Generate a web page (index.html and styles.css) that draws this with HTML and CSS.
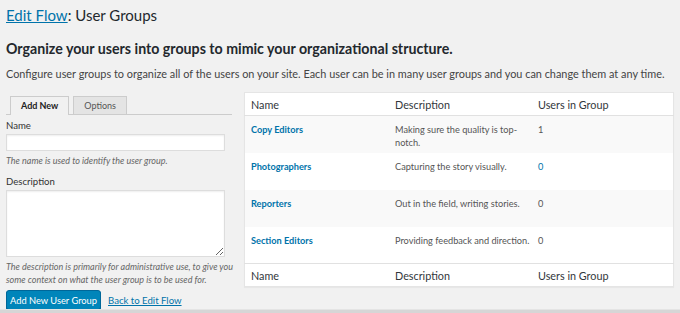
FILE: index.html
```html
<!DOCTYPE html>
<html>
<head>
    <title>Edit Flow: User Groups</title>
    <link rel="stylesheet" href="styles.css">
</head>
<body>
    <div class="wrap">
        <h1><a href="#">Edit Flow</a>: User Groups</h1>
        <h2>Organize your users into groups to mimic your organizational structure.</h2>
        <p class="intro">Configure user groups to organize all of the users on your site. Each user can be in many user groups and you can change them at any time.</p>

        <div class="columns">
            <div class="col-left">
                <div class="tabs">
                    <span class="tab active">Add New</span>
                    <span class="tab">Options</span>
                </div>
                <div class="form-field">
                    <label for="name">Name</label>
                    <input type="text" id="name">
                    <p class="help">The name is used to identify the user group.</p>
                </div>
                <div class="form-field">
                    <label for="description">Description</label>
                    <textarea id="description"></textarea>
                    <p class="help">The description is primarily for administrative use, to give you some context on what the user group is to be used for.</p>
                </div>
                <div class="actions">
                    <button class="btn-primary">Add New User Group</button>
                    <a href="#" class="back">Back to Edit Flow</a>
                </div>
            </div>

            <div class="col-right">
                <table class="groups">
                    <thead>
                        <tr><th class="c-name">Name</th><th class="c-desc">Description</th><th>Users in Group</th></tr>
                    </thead>
                    <tbody>
                        <tr class="alt"><td><a href="#">Copy Editors</a></td><td class="desc">Making sure the quality is top-notch.</td><td>1</td></tr>
                        <tr><td><a href="#">Photographers</a></td><td class="desc">Capturing the story visually.</td><td class="count">0</td></tr>
                        <tr class="alt"><td><a href="#">Reporters</a></td><td class="desc">Out in the field, writing stories.</td><td>0</td></tr>
                        <tr><td><a href="#">Section Editors</a></td><td class="desc">Providing feedback and direction.</td><td>0</td></tr>
                    </tbody>
                    <tfoot>
                        <tr><th>Name</th><th>Description</th><th>Users in Group</th></tr>
                    </tfoot>
                </table>
            </div>
        </div>
    </div>
    <div class="footer-line"></div>
</body>
</html>
```

FILE: styles.css
```css
body {
    margin: 0;
    background-color: #f1f1f1;
    font-family: Lato, "Open Sans", sans-serif;
    color: #444;
    height: 313px;
    overflow: hidden;
    position: relative;
}

.wrap {
    padding: 0 6px;
}

h1 {
    font-size: 15px;
    font-weight: normal;
    color: #23282d;
    margin: 0;
    padding-top: 4px;
    line-height: 22px;
}

h1 a {
    color: #0073aa;
}

h2 {
    font-size: 14.2px;
    font-weight: bold;
    color: #23282d;
    margin: 13px 0 0;
    line-height: 20px;
}

.intro {
    font-size: 10.9px;
    margin: 7px 0 0;
    line-height: 16px;
    color: #444;
    white-space: nowrap;
}

.columns {
    display: flex;
    gap: 4px;
    margin-top: 10px;
}

.col-left {
    width: 234px;
    padding-top: 4px;
}

.col-right {
    flex: 1;
}

.tabs {
    display: flex;
    gap: 4px;
    padding-left: 4px;
    border-bottom: 1px solid #ccc;
    height: 18px;
    margin-right: 8px;
}

.tab {
    font-size: 9px;
    line-height: 17px;
    padding: 0 10px;
    border: 1px solid #ccc;
    border-bottom: none;
    background-color: #e4e4e4;
    color: #555;
}

.tab.active {
    background-color: #f1f1f1;
    color: #222;
    font-weight: bold;
    height: 18px;
}

.form-field label {
    display: block;
    font-size: 9.6px;
    color: #333;
    line-height: 13px;
    margin-top: 4px;
}

.form-field + .form-field label {
    margin-top: 8px;
}

.form-field input,
.form-field textarea {
    display: block;
    box-sizing: border-box;
    width: 219px;
    border: 1px solid #ddd;
    box-shadow: inset 0 1px 2px rgba(0, 0, 0, 0.07);
    background-color: #fff;
    margin: 2px 0 0;
}

.form-field input {
    height: 17px;
}

.form-field textarea {
    height: 67px;
    resize: vertical;
}

.help {
    font-size: 9px;
    font-style: italic;
    color: #666;
    margin: 3px 0 0;
    line-height: 13px;
}

.actions {
    margin-top: 4px;
    display: flex;
    align-items: center;
    gap: 7px;
}

.btn-primary {
    background-color: #0085ba;
    border: 1px solid #006799;
    border-radius: 3px;
    color: #fff;
    font-family: inherit;
    font-size: 9.3px;
    white-space: nowrap;
    height: 20px;
    width: 95px;
    padding: 0;
    box-shadow: 0 1px 0 #006799;
}

.back {
    font-size: 9.6px;
    color: #0073aa;
}

.groups {
    width: 430px;
    border-collapse: collapse;
    background-color: #fff;
    border: 1px solid #e5e5e5;
    box-shadow: 0 1px 1px rgba(0, 0, 0, 0.04);
    font-size: 9.2px;
}

.groups th {
    text-align: left;
    font-weight: normal;
    font-size: 10.8px;
    color: #32373c;
    height: 22px;
    padding: 0 6px;
}

.groups thead th {
    border-bottom: 1px solid #e1e1e1;
}

.groups tfoot th {
    border-top: 1px solid #e1e1e1;
}

.c-name {
    width: 132px;
}

.c-desc {
    width: 131px;
}

.groups td {
    vertical-align: top;
    height: 37px;
    box-sizing: border-box;
    padding: 7px 6px 0;
    line-height: 13px;
    color: #555;
}

.groups td.desc {
    padding-right: 2px;
}

.groups td a {
    color: #0073aa;
    font-weight: bold;
    text-decoration: none;
}

.groups td.count {
    color: #0073aa;
}

.groups tr.alt {
    background-color: #f9f9f9;
}

.footer-line {
    position: absolute;
    left: 0;
    right: 0;
    bottom: 0;
    height: 3px;
    background-color: #d6d6d6;
    border-top: 1px solid #e4e4e4;
}
```
